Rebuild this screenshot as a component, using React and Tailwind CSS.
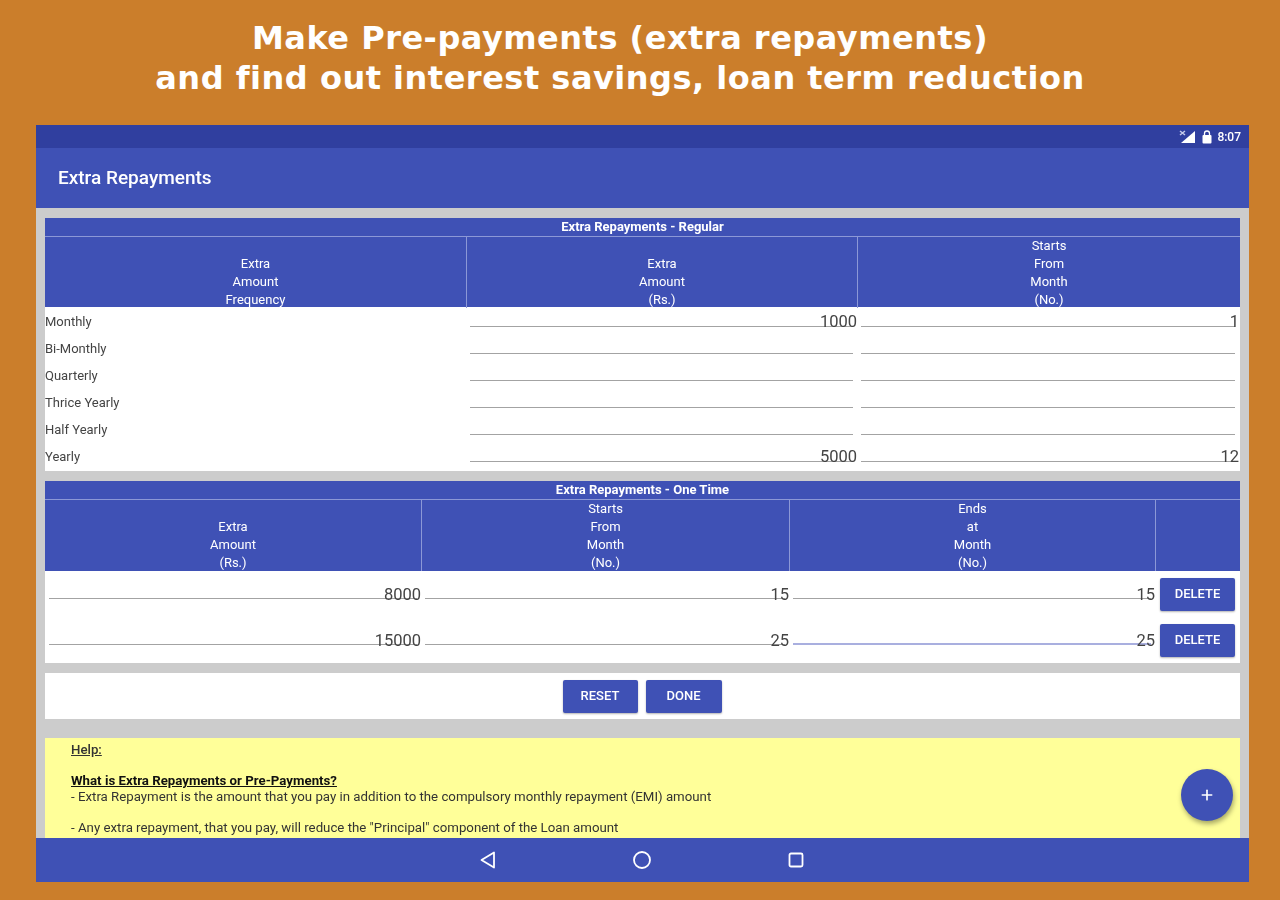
import React from 'react';
import { Plus } from 'lucide-react';

const regularRows = [
  { label: 'Monthly', amount: '1000', month: '1' },
  { label: 'Bi-Monthly', amount: '', month: '' },
  { label: 'Quarterly', amount: '', month: '' },
  { label: 'Thrice Yearly', amount: '', month: '' },
  { label: 'Half Yearly', amount: '', month: '' },
  { label: 'Yearly', amount: '5000', month: '12' },
];

const oneTimeRows = [
  { amount: '8000', from: '15', to: '15' },
  { amount: '15000', from: '25', to: '25', focused: true },
];

function HeaderCell({ lines, divider }) {
  return (
    <div className={`flex flex-col justify-end items-center text-white text-[13px] leading-[18px] ${divider ? 'border-l border-[#8c98d6]' : ''}`}>
      {lines.map((line, i) => (
        <span key={i} className={i === lines.length - 1 ? '-mb-[1px]' : ''}>{line}</span>
      ))}
    </div>
  );
}

function Field({ value, focused, className }) {
  return (
    <div className={`border-b text-right text-[16.5px] text-[#444] ${focused ? 'border-b-2 border-[#a9afdf]' : 'border-[#a3a3a3]'} ${className}`}>
      <div className="-mr-[4px] h-full">{value || '\u00A0'}</div>
    </div>
  );
}

function ActionButton({ label, className }) {
  return (
    <button className={`h-[33px] bg-[#3f51b5] text-white text-[13px] font-medium rounded-[2px] shadow-[0_1px_2px_rgba(0,0,0,0.3)] ${className}`}>
      {label}
    </button>
  );
}

function StatusIcons() {
  return (
    <div className="flex items-center gap-[5px] text-white text-[12px] font-medium">
      <svg width="18" height="14" viewBox="0 0 18 14">
        <path d="M16 1v12H2z" fill="#fff" />
        <path d="M1 1l5 4M6 1L1 5" stroke="#c5cae9" strokeWidth="1.5" />
      </svg>
      <svg width="10" height="14" viewBox="0 0 10 14">
        <rect x="0.5" y="5" width="9" height="8.5" rx="1" fill="#fff" />
        <path d="M2.5 5V3.5a2.5 2.5 0 0 1 5 0V5" fill="none" stroke="#fff" strokeWidth="1.3" />
      </svg>
      <span>8:07</span>
    </div>
  );
}

function NavBar() {
  return (
    <div className="h-[44px] bg-[#3f51b5] flex items-center justify-center gap-[130px] pr-[1px]">
      <svg width="24" height="24" viewBox="0 0 24 24" fill="none" stroke="#fff" strokeWidth="1.8" strokeLinejoin="round">
        <path d="M18 4.5v15L5.5 12z" />
      </svg>
      <svg width="24" height="24" viewBox="0 0 24 24" fill="none" stroke="#fff" strokeWidth="1.8">
        <circle cx="12" cy="12" r="8" />
      </svg>
      <svg width="24" height="24" viewBox="0 0 24 24" fill="none" stroke="#fff" strokeWidth="1.8" strokeLinejoin="round">
        <rect x="5.5" y="5.5" width="13" height="13" rx="1.5" />
      </svg>
    </div>
  );
}

export default function App() {
  return (
    <div className="w-[1280px] h-[900px] overflow-hidden bg-[#cb7e2b] font-['Roboto',sans-serif]">
      {/* Headline */}
      <div className="h-[125px] pt-[18px] pr-[40px] text-center text-white text-[32px] leading-[40px] font-['DejaVu_Sans',sans-serif] font-bold tracking-[0.5px] whitespace-nowrap">
        <div>Make Pre-payments (extra repayments)</div>
        <div>and find out interest savings, loan term reduction</div>
      </div>

      {/* Tablet screen */}
      <div className="relative ml-[36px] w-[1213px] h-[757px] flex flex-col overflow-hidden blur-[0.7px]">
        <div className="h-[23px] bg-[#303f9f] flex items-center justify-end pr-[8px]">
          <StatusIcons />
        </div>
        <div className="h-[60px] bg-[#3f51b5] flex items-center pl-[22px] pt-[1px] text-white text-[19px] font-medium">
          Extra Repayments
        </div>

        <div className="flex-1 min-h-0 overflow-hidden bg-[#cccccc] pt-[10px] pl-[9px] pr-[9px] flex flex-col">
          {/* Regular */}
          <div className="bg-white h-[253px] shrink-0">
            <div className="h-[18px] bg-[#3f51b5] text-white text-[13px] font-bold leading-[18px] text-center border-b border-[#8c98d6] box-content">
              Extra Repayments - Regular
            </div>
            <div className="grid grid-cols-[421px_391px_383px] h-[70px] bg-[#3f51b5]">
              <HeaderCell lines={['Extra', 'Amount', 'Frequency']} />
              <HeaderCell divider lines={['Extra', 'Amount', '(Rs.)']} />
              <HeaderCell divider lines={['Starts', 'From', 'Month', '(No.)']} />
            </div>
            {regularRows.map((row) => (
              <div key={row.label} className="grid grid-cols-[421px_391px_383px] h-[27px]">
                <div className="text-[13px] leading-[29px] text-[#444]">{row.label}</div>
                <Field value={row.amount} className="ml-[4px] mr-[4px] h-[20px] leading-[29px]" />
                <Field value={row.month} className="ml-[4px] mr-[5px] h-[20px] leading-[29px]" />
              </div>
            ))}
          </div>

          {/* One time */}
          <div className="bg-white h-[182px] shrink-0 mt-[10px]">
            <div className="h-[18px] bg-[#3f51b5] text-white text-[13px] font-bold leading-[18px] text-center border-b border-[#8c98d6] box-content">
              Extra Repayments - One Time
            </div>
            <div className="grid grid-cols-[376px_368px_366px_85px] h-[71px] bg-[#3f51b5]">
              <HeaderCell lines={['Extra', 'Amount', '(Rs.)']} />
              <HeaderCell divider lines={['Starts', 'From', 'Month', '(No.)']} />
              <HeaderCell divider lines={['Ends', 'at', 'Month', '(No.)']} />
              <div className="border-l border-[#8c98d6]" />
            </div>
            {oneTimeRows.map((row) => (
              <div key={row.amount} className="grid grid-cols-[376px_368px_366px_85px] h-[46px] items-center">
                <Field value={row.amount} className="ml-[4px] mr-[4px] h-[17px] leading-[26px] self-start mt-[11px]" />
                <Field value={row.from} className="ml-[4px] mr-[4px] h-[17px] leading-[26px] self-start mt-[11px]" />
                <Field value={row.to} focused={row.focused} className="ml-[4px] mr-[4px] h-[17px] leading-[26px] self-start mt-[11px]" />
                <ActionButton label="DELETE" className="ml-[5px] w-[75px]" />
              </div>
            ))}
          </div>

          {/* Actions */}
          <div className="bg-white h-[46px] shrink-0 mt-[10px] flex items-center justify-center gap-[8px] pr-[1px]">
            <ActionButton label="RESET" className="w-[75px]" />
            <ActionButton label="DONE" className="w-[76px]" />
          </div>

          {/* Help */}
          <div className="bg-[#ffff99] flex-1 min-h-0 shrink-0 mt-[19px] pl-[26px] pt-[4px] text-[13.25px] leading-[15.5px] text-[#333] overflow-hidden">
            <div className="underline font-medium">Help:</div>
            <div className="h-[15.5px]" />
            <div className="underline font-bold text-[#111]">What is Extra Repayments or Pre-Payments?</div>
            <div>- Extra Repayment is the amount that you pay in addition to the compulsory monthly repayment (EMI) amount</div>
            <div className="h-[15.5px]" />
            <div>- Any extra repayment, that you pay, will reduce the "Principal" component of the Loan amount</div>
          </div>
        </div>

        <NavBar />

        <div className="absolute left-[1145px] top-[644px] w-[52px] h-[52px] rounded-full bg-[#3f51b5] shadow-[1px_3px_5px_rgba(0,0,0,0.35)] flex items-center justify-center text-white">
          <Plus size={16} strokeWidth={2.5} />
        </div>
      </div>
    </div>
  );
}
